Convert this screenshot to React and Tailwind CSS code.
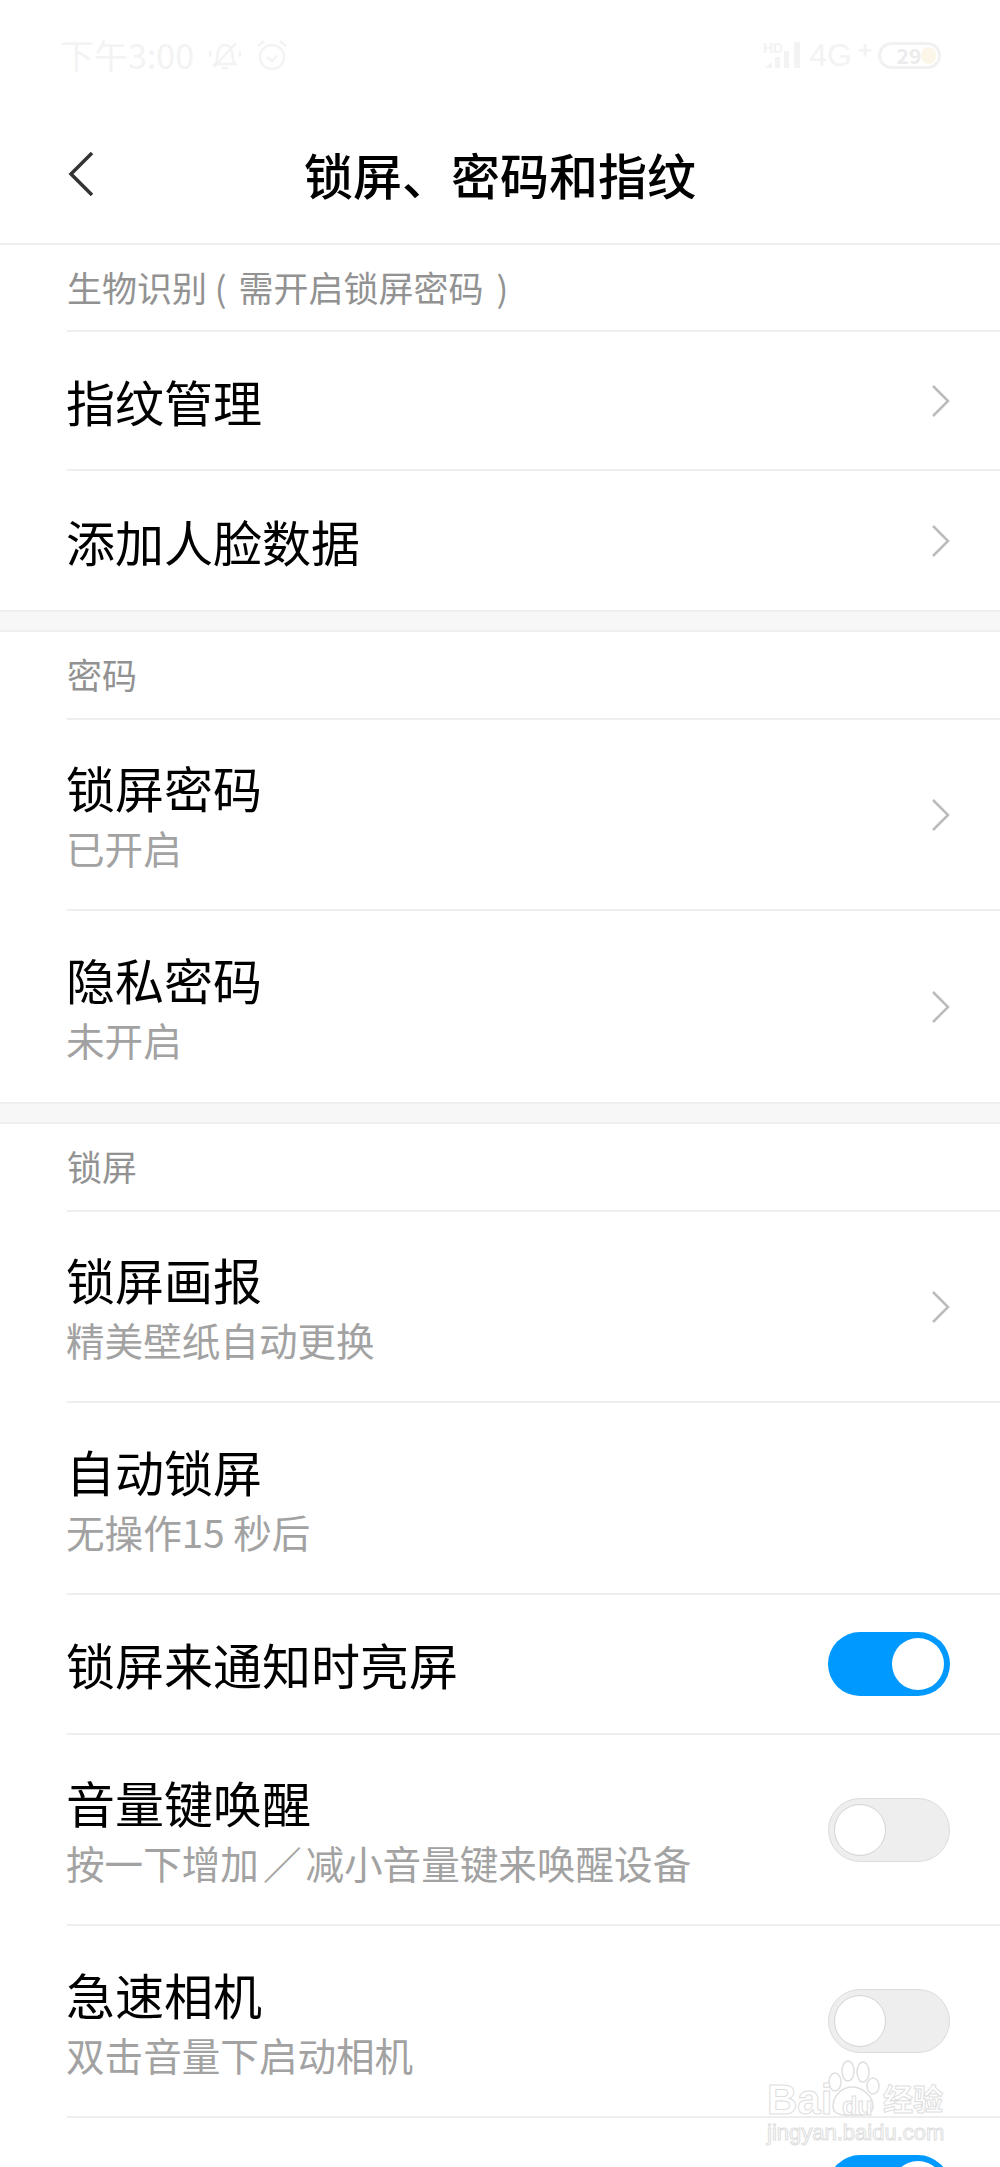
import React from 'react'

const font = { fontFamily: '"Noto Sans CJK SC", "Noto Sans", sans-serif' }
const latin = { fontFamily: '"Liberation Sans", sans-serif' }

function Chevron() {
  return (
    <svg width="20" height="34" viewBox="0 0 20 34" fill="none" className="shrink-0">
      <path d="M3 2l15 15L3 32" stroke="#bcbcbc" strokeWidth="2.6" />
    </svg>
  )
}

function Toggle({ on }) {
  if (on) {
    return (
      <div className="flex h-16 w-[122px] shrink-0 items-center justify-end rounded-full bg-[#0099ff] pr-1.5">
        <div className="h-[52px] w-[52px] rounded-full bg-white" />
      </div>
    )
  }
  return (
    <div className="flex h-16 w-[122px] shrink-0 items-center rounded-full border border-[#dcdcdc] bg-[#eeeeee] pl-[5px]">
      <div className="h-[52px] w-[52px] rounded-full border border-[#d4d4d4] bg-white" />
    </div>
  )
}

function SectionTitle({ children, first }) {
  return (
    <div className={`ml-[67px] flex items-center border-b-2 border-[#eeeeee] text-[35px] leading-none text-[#929292] ${first ? 'h-[87px] pb-[2px]' : 'h-[88px] pb-[3px]'}`}>
      {children}
    </div>
  )
}

function Row({ title, sub, right, last, height }) {
  return (
    <div className={`ml-[67px] flex items-center justify-between pr-[50px] ${height} ${last ? '' : 'border-b-2 border-[#eeeeee]'}`}>
      <div className="-ml-px">
        <div className="text-[49px] leading-[60px] text-black">{title}</div>
        {sub && <div className="mt-[5px] text-[38.6px] leading-[50px] text-[#a2a2a2]">{sub}</div>}
      </div>
      {right}
    </div>
  )
}

function Gap() {
  return <div className="h-[22px] border-y-2 border-[#eeeeee] bg-[#f7f7f7]" />
}

function StatusBar() {
  return (
    <div className="flex h-[110px] items-center justify-between pl-[60px] pr-[59px] text-[#f3f3f3]">
      <div className="flex items-center gap-[15px]">
        <span className="text-[34px] leading-none">下午3:00</span>
        <svg width="32" height="32" viewBox="0 0 32 32" fill="none" stroke="#f3f3f3" strokeWidth="2.5">
          <path d="M6 25c3-3 2-8 3-12 1-5 4-7 7-7s6 2 7 7c1 4 0 9 3 12zM13 29h6M5 28L27 4M1 12v6M31 12v6" />
        </svg>
        <svg width="32" height="32" viewBox="0 0 32 32" fill="none" stroke="#f3f3f3" strokeWidth="2.5">
          <circle cx="16" cy="18" r="12" />
          <path d="M11 18l5 4 5-5M2 7l6-5M30 7l-6-5" />
        </svg>
      </div>
      <div className="flex items-center gap-[6px]">
        <svg width="40" height="30" viewBox="0 0 40 30" fill="#f3f3f3">
          <text x="0" y="13" fontSize="14" fontWeight="700" fontFamily="Liberation Sans, sans-serif">HD</text>
          <path d="M2 28l7-6v6zM12 28V17h5v11zM21 28V11h5v17zM31 28V2h6v26z" />
        </svg>
        <span className="text-[32px] leading-none" style={latin}>4G</span>
        <span className="mb-3 w-[14px] text-[24px] font-bold leading-none">+</span>
        <div className="flex h-[27px] w-[63px] items-center justify-center rounded-full border-[3px] border-[#f1f1f1] pl-[14px] text-[21px] font-semibold leading-none text-[#ececec]">
          29
          <span className="h-[17px] w-[15px] rounded-full bg-[#fbf6e8]" />
        </div>
      </div>
    </div>
  )
}

function Watermark() {
  const outline = 'text-white [-webkit-text-stroke:1px_#dedede]'
  return (
    <div className="pointer-events-none absolute left-[767px] top-[2058px] h-[90px] w-[180px]">
      <svg width="60" height="60" viewBox="0 0 60 60" fill="#ffffff" stroke="#dfdfdf" strokeWidth="1.5" className="absolute left-[56px] top-0">
        <ellipse cx="12" cy="24" rx="6" ry="9" />
        <ellipse cx="25" cy="13" rx="6" ry="10" />
        <ellipse cx="40" cy="14" rx="6" ry="10" />
        <ellipse cx="50" cy="28" rx="6" ry="8" />
        <path d="M10 48c0-10 9-19 19-19s21 9 21 19c0 7-6 9-11 9H21c-6 0-11-3-11-9z" />
      </svg>
      <span className={`absolute left-0 top-[21px] text-[42px] font-bold leading-none ${outline}`} style={latin}>Bai</span>
      <span className={`absolute left-[75px] top-[36px] text-[25px] font-bold leading-none ${outline}`} style={latin}>du</span>
      <span className={`absolute left-[116px] top-[24px] text-[30px] font-bold leading-none ${outline}`} style={font}>经验</span>
      <span className={`absolute left-0 top-[64px] text-[22px] font-normal leading-none ${outline}`} style={latin}>jingyan.baidu.com</span>
    </div>
  )
}

export default function App() {
  return (
    <div className="relative h-[2167px] w-[1000px] overflow-hidden bg-white" style={font}>
      <StatusBar />
      <div className="relative flex h-[135px] items-center justify-center border-b-2 border-[#eeeeee] pb-[7px]">
        <svg width="26" height="46" viewBox="0 0 26 46" fill="none" className="absolute left-[68px] top-[41px]">
          <path d="M24 2L3 23l21 21" stroke="#333333" strokeWidth="3.5" />
        </svg>
        <h1 className="text-[49px] font-medium leading-none text-black">锁屏、密码和指纹</h1>
      </div>

      <SectionTitle first>
        <span>
          生物识别 <span className="mr-[4px]">(</span> 需开启锁屏密码 <span className="ml-[5px]">)</span>
        </span>
      </SectionTitle>
      <Row height="h-[139px]" title="指纹管理" right={<Chevron />} />
      <Row height="h-[139px]" title="添加人脸数据" right={<Chevron />} last />
      <Gap />

      <SectionTitle>密码</SectionTitle>
      <Row height="h-[191px]" title="锁屏密码" sub="已开启" right={<Chevron />} />
      <Row height="h-[191px]" title="隐私密码" sub="未开启" right={<Chevron />} last />
      <Gap />

      <SectionTitle>锁屏</SectionTitle>
      <Row height="h-[191px]" title="锁屏画报" sub="精美壁纸自动更换" right={<Chevron />} />
      <Row height="h-[192px]" title="自动锁屏" sub="无操作15 秒后" />
      <Row height="h-[140px]" title="锁屏来通知时亮屏" right={<Toggle on />} />
      <Row
        height="h-[191px]"
        title="音量键唤醒"
        sub={<>按一下增加<span className="mx-1">／</span>减小音量键来唤醒设备</>}
        right={<Toggle />}
      />
      <Row height="h-[192px]" title="急速相机" sub="双击音量下启动相机" right={<Toggle />} />
      <div className="ml-[67px] flex justify-end pr-[50px] pt-[37px]">
        <Toggle on />
      </div>
      <Watermark />
    </div>
  )
}
